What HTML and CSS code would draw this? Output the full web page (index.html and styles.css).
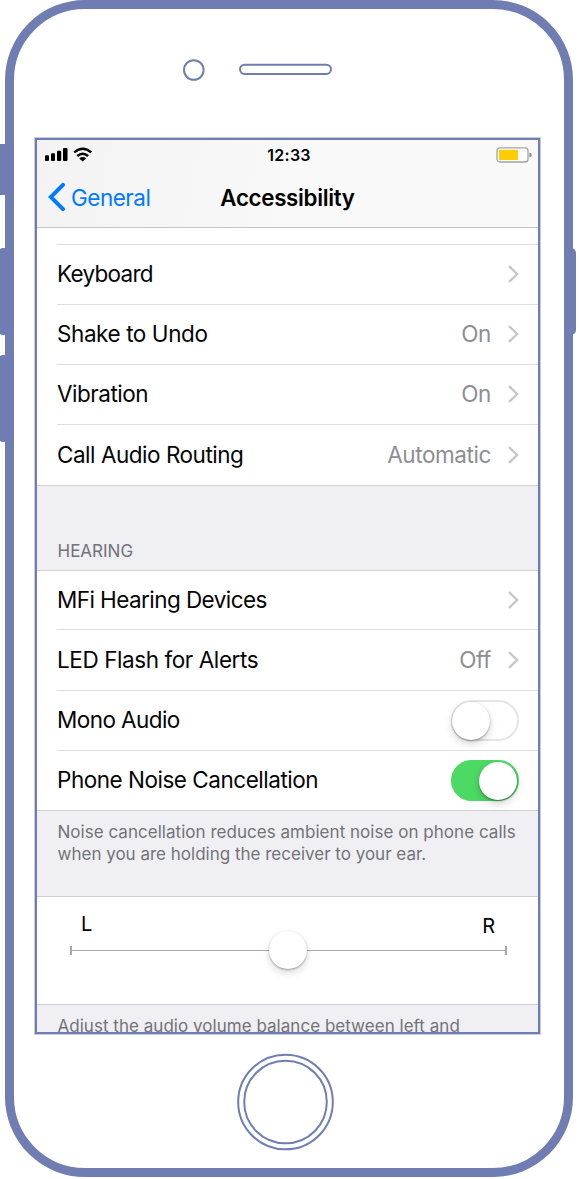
FILE: index.html
```html
<!DOCTYPE html>
<html lang="en">
<head>
<meta charset="utf-8">
<title>Accessibility</title>
<link rel="stylesheet" href="styles.css">
</head>
<body>
<svg class="defs" width="0" height="0"><symbol id="chev" viewBox="0 0 12 18"><path d="M2 1.2 10.1 9 2 16.8" fill="none" stroke="#c7c7cc" stroke-width="2.4"/></symbol></svg>
<div class="phone">
  <i class="side mute"></i><i class="side up"></i><i class="side down"></i><i class="side power"></i>
  <div class="bezel">
    <svg width="140" height="24" viewBox="0 0 140 24" fill="none" stroke="#707db3" stroke-width="2"><circle cx="11.8" cy="12" r="9.8"/><rect x="58" y="6.7" width="91" height="9.2" rx="4.6"/></svg>
  </div>
  <div class="screen">
    <header class="nav">
      <div class="status">
        <svg class="signal" width="48" height="16" viewBox="0 0 48 16"><rect x="0" y="8.3" width="4" height="5.6" rx="1"/><rect x="6" y="6.3" width="4" height="7.6" rx="1"/><rect x="12" y="3.8" width="4.2" height="10.1" rx="1"/><rect x="18" y="1" width="4.5" height="12.9" rx="1"/><path d="M29.2 5.4q8.5-7.2 17 0M32.3 9q5.4-4.4 10.8 0" fill="none" stroke="#000" stroke-width="2.5"/><path d="M34.2 11.4q3.5-2.6 7 0l-3.5 3z"/></svg>
        <span class="time">12:33</span>
        <svg class="battery" width="36" height="16" viewBox="0 0 36 16"><rect x="1" y=".8" width="31" height="14.2" rx="3" fill="#fff" stroke="#a3a3a6" stroke-width="1.3"/><rect x="3" y="2.8" width="19" height="10.2" fill="#fc0"/><path d="M33.4 5.4q2.4.4 2.4 2.6t-2.4 2.6z" fill="#8f8f92"/></svg>
      </div>
      <div class="bar">
        <div class="back"><svg width="18" height="30" viewBox="0 0 18 30"><path d="M15 2.8 2.8 15 15 27.2" fill="none" stroke="#007aff" stroke-width="4" stroke-linecap="round"/></svg><span>General</span></div>
        <h1>Accessibility</h1>
      </div>
    </header>
    <section class="list first">
      <div class="row r60"><span class="tightest">Keyboard</span><svg class="chev"><use href="#chev"/></svg></div>
      <div class="row r60"><span class="snug">Shake to Undo</span><b>On</b><svg class="chev"><use href="#chev"/></svg></div>
      <div class="row r60"><span>Vibration</span><b>On</b><svg class="chev"><use href="#chev"/></svg></div>
      <div class="row r61"><span>Call Audio Routing</span><b>Automatic</b><svg class="chev"><use href="#chev"/></svg></div>
    </section>
    <h2>HEARING</h2>
    <section class="list">
      <div class="row r58"><span class="tight">MFi Hearing Devices</span><svg class="chev"><use href="#chev"/></svg></div>
      <div class="row r61"><span class="snug">LED Flash for Alerts</span><b>Off</b><svg class="chev"><use href="#chev"/></svg></div>
      <div class="row r60"><span class="tight">Mono Audio</span><div class="toggle"><i></i></div></div>
      <div class="row r60"><span>Phone Noise Cancellation</span><div class="toggle on"><i></i></div></div>
    </section>
    <p class="note">Noise cancellation reduces ambient noise on phone calls<br><span class="even">when you are holding the receiver to your ear.</span></p>
    <section class="balance">
      <div class="ends"><span>L</span><span class="right">R</span></div>
      <div class="track"><i></i></div>
    </section>
    <p class="note last">Adjust the audio volume balance between left and</p>
  </div>
  <svg class="home" width="98" height="98" viewBox="0 0 98 98" fill="none" stroke="#707db3" stroke-width="2"><circle cx="48.5" cy="49" r="47.3"/><circle cx="48.5" cy="49" r="41.3"/></svg>
</div>
</body>
</html>
```
FILE: styles.css
```css
* { box-sizing: border-box; }
body { margin: 0; background: #fff; overflow: hidden; font-family: Inter, "Liberation Sans", sans-serif; color: #050505; }
.defs { position: absolute; }
.phone { position: relative; width: 567.5px; height: 1176.5px; margin-left: 5px; border: 9px solid #707db3; border-radius: 80px; display: flex; flex-direction: column; background: #fff; }
.side { position: absolute; background: #707db3; width: 8px; left: -16px; border-radius: 5px 0 0 5px; }
.mute { top: 135px; height: 51px; border-radius: 2px 0 0 2px; }
.up { top: 239px; height: 87px; }
.down { top: 346px; height: 87px; }
.power { left: auto; right: -12px; width: 7px; top: 239px; height: 87px; border-radius: 0 5px 5px 0; }
.bezel { height: 129px; padding: 49px 0 0 168px; flex: none; }
.bezel svg { display: block; overflow: visible; }
.screen { width: 505px; height: 896px; margin-left: 21px; flex: none; border: 2px solid #707db3; outline: 1px solid rgba(112,125,179,.4); background: #efeff4; overflow: hidden; }
.nav { height: 88px; border-bottom: 1px solid #c4c4c7; background: linear-gradient(100deg, #f3f3f4, #f9f9f9 55%); }
.status { height: 30px; display: grid; grid-template-columns: 1fr auto 1fr; align-items: center; padding: 0 6px 0 8px; }
.signal { display: block; }
.time { font-size: 16px; font-weight: 600; letter-spacing: .3px; padding-left: 1px; }
.battery { justify-self: end; display: block; }
.bar { height: 57px; display: grid; grid-template-columns: 1fr auto 1fr; align-items: center; padding: 0 11px 3px 11px; }
.back { display: flex; align-items: center; gap: 5px; color: #007aff; font-size: 22.5px; letter-spacing: -.5px; }
h1 { margin: 0; font-size: 22.3px; font-weight: 600; letter-spacing: -.3px; color: #000; }
.list { background: #fff; border-bottom: 1px solid #d0d0d4; }
.first { padding-top: 16px; }
.row { margin-left: 20px; padding-right: 19px; display: flex; align-items: center; border-top: 1px solid #dededf; font-size: 22.5px; letter-spacing: -.48px; white-space: nowrap; }
.list:not(.first) .row:first-child { border-top: 0; }
.r58 { height: 58px; }
.r60 { height: 60px; }
.r61 { height: 61px; }
.row > span, .row > b { padding-bottom: 2px; }
.row > span { margin-right: auto; }
.snug { letter-spacing: -.42px; }
.tight { letter-spacing: -.57px; }
.tightest { letter-spacing: -.72px; }
.row b { font-weight: 400; color: #8e8e93; margin-right: 16px; letter-spacing: -.4px; }
.chev { width: 12px; height: 18px; flex: none; margin-top: -1px; }
h2 { margin: 0; height: 85px; padding: 54px 0 0 20.5px; border-bottom: 1px solid #d0d0d4; font-size: 17px; line-height: 22px; font-weight: 400; color: #737378; }
.toggle { width: 68.5px; height: 41px; border-radius: 21px; border: 2px solid #e5e5e5; display: flex; }
.toggle i { width: 38px; height: 38px; margin: -.5px 0 0 -.5px; border-radius: 50%; background: #fff; box-shadow: 0 4px 9px rgba(0,0,0,.16), 0 1px 2px rgba(0,0,0,.35); }
.toggle.on { background: #4cd964; border-color: #4cd964; justify-content: flex-end; }
.note { margin: 0; height: 86px; padding: 10px 0 0 20.5px; border-bottom: 1px solid #d0d0d4; font-size: 17px; line-height: 22px; letter-spacing: .03px; color: #737378; white-space: nowrap; }
.even { letter-spacing: 0; }
.balance { height: 108px; background: #fff; border-bottom: 1px solid #d0d0d4; padding: 15px 31px 0 33px; }
.ends { display: flex; justify-content: space-between; padding: 0 12px 0 11px; font-size: 20px; line-height: 24px; color: #000; }
.right { padding-top: 2px; }
.track { height: 9px; margin-top: 8px; border: solid #a9a9ab; border-width: 0 2px; background: linear-gradient(#a9a9ab, #a9a9ab) 0 4px / 100% 1px no-repeat; display: flex; justify-content: center; align-items: center; }
.track i { flex: none; width: 38px; height: 38px; margin: -2px 1.5px 0 0; border-radius: 50%; background: #fff; box-shadow: 0 4px 9px rgba(0,0,0,.14), 0 1px 2px rgba(0,0,0,.32); }
.last { border: 0; }
.home { display: block; margin: 19px 0 0 222.5px; flex: none; }
```
